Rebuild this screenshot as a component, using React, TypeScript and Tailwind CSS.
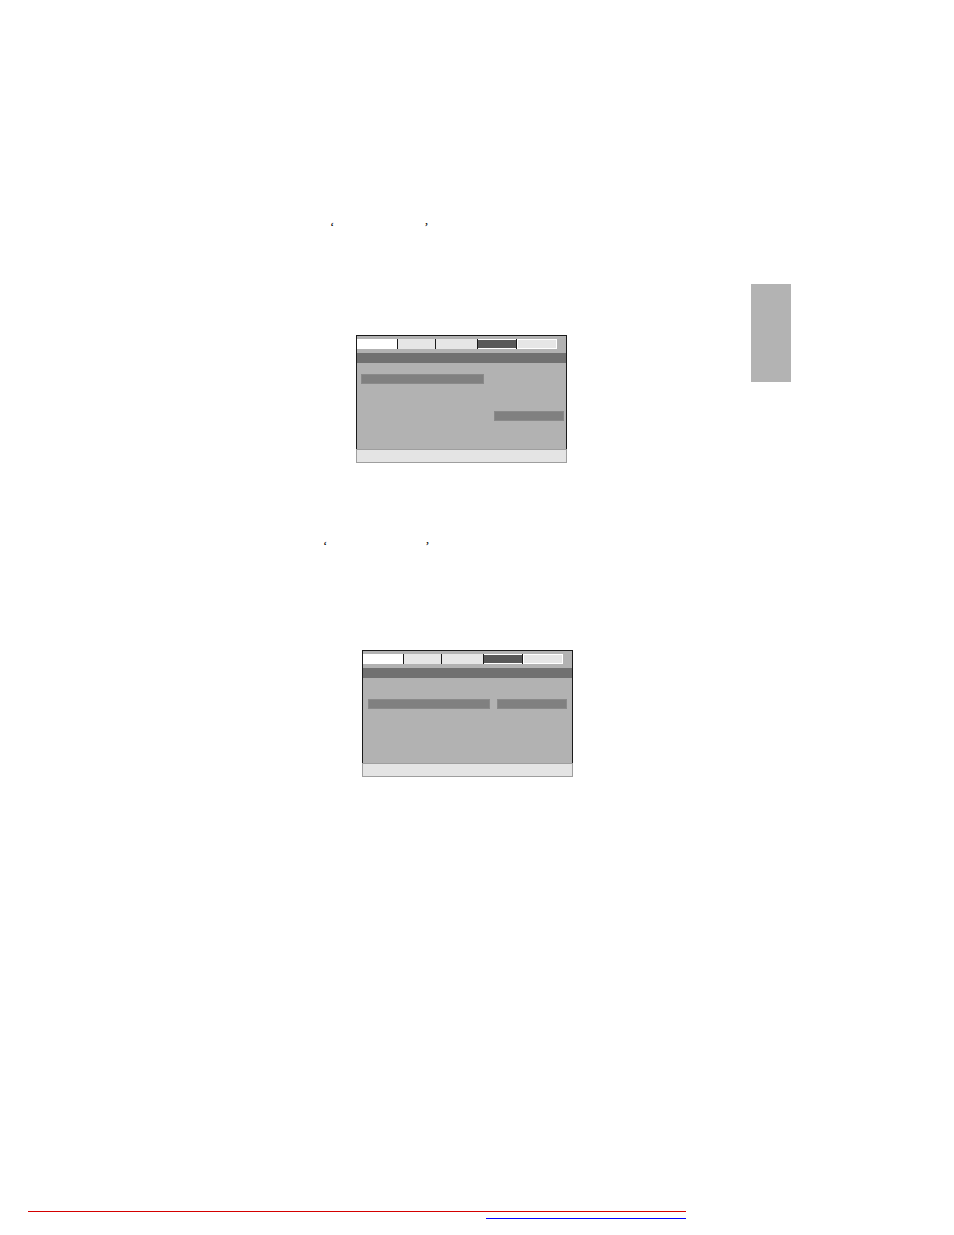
type Bar = { left: number; top: number; width: number };

interface PanelProps {
  bars: Bar[];
  contentHeight: number;
}

const tabs = [
  { w: "w-[40px]", cls: "bg-white" },
  { w: "w-[37px]", cls: "bg-[#e6e6e6]" },
  { w: "w-[41px]", cls: "bg-[#e6e6e6]" },
  { w: "w-[38px]", cls: "bg-[#585858] border-y border-white" },
  { w: "w-[40px]", cls: "bg-[#e6e6e6] border border-white" },
];

function MenuPanel({ bars, contentHeight }: PanelProps) {
  return (
    <div className="w-[211px]">
      {/* Screen body */}
      <div className="border-x border-t border-[#1a1a1a] bg-[#b2b2b2] pt-[3px]">
        <div className="flex h-[10px]">
          {tabs.map((t, i) => (
            <div key={i} className="flex">
              {i > 0 && <div className="w-px bg-[#1a1a1a]" />}
              <div className={`${t.w} h-full ${t.cls}`} />
            </div>
          ))}
        </div>
        <div className="mt-[4px] h-[10px] bg-[#717171]" />
        <div className="relative" style={{ height: contentHeight }}>
          {bars.map((b, i) => (
            <div
              key={i}
              className="absolute h-[10px] bg-[#808080] border border-[#8a8a8a]"
              style={{ left: b.left, top: b.top, width: b.width }}
            />
          ))}
        </div>
      </div>
      {/* Status bar */}
      <div className="h-[14px] bg-[#e4e4e4] border border-[#9e9e9e]" />
    </div>
  );
}

function QuoteLine({ left, gap }: { left: number; gap: number }) {
  return (
    <div
      className="flex h-[12px] text-[13px] leading-[12px] text-black"
      style={{ paddingLeft: left, fontFamily: '"Liberation Serif", serif' }}
    >
      <span>‘</span>
      <span style={{ width: gap }} />
      <span>’</span>
    </div>
  );
}

export default function App() {
  return (
    <div className="w-[954px] h-[1235px] bg-white flex overflow-hidden">
      {/* Page body */}
      <div className="w-[751px] flex-shrink-0 flex flex-col pt-[221px]">
        <QuoteLine left={330} gap={90} />

        <div className="mt-[102px] ml-[356px]">
          <MenuPanel
            contentHeight={86}
            bars={[
              { left: 4, top: 11, width: 123 },
              { left: 137, top: 48, width: 70 },
            ]}
          />
        </div>

        <div className="mt-[77px]">
          <QuoteLine left={323} gap={98} />
        </div>

        <div className="mt-[98px] ml-[362px]">
          <MenuPanel
            contentHeight={85}
            bars={[
              { left: 5, top: 21, width: 122 },
              { left: 134, top: 21, width: 70 },
            ]}
          />
        </div>

        {/* Footer rules */}
        <div className="mt-[434px] ml-[28px] w-[658px] h-px bg-[#d40000]" />
        <div className="mt-[6px] ml-[486px] w-[200px] h-px bg-[#0000ff]" />
      </div>

      {/* Chapter tab */}
      <div className="pt-[284px]">
        <div className="w-[40px] h-[98px] bg-[#b3b3b3]" />
      </div>
    </div>
  );
}
